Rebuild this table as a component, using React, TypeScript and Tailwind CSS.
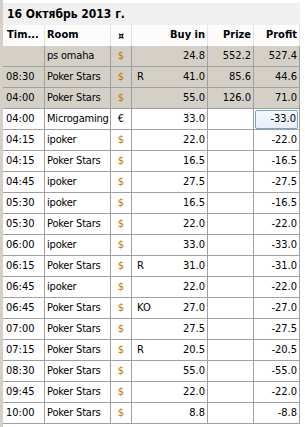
import React from "react";

type Row = {
  t: string;
  room: string;
  c: string;
  type: string;
  buy: string;
  prize: string;
  profit: string;
  gray?: boolean;
  sel?: boolean;
};

const rows: Row[] = [
  { t: "", room: "ps omaha", c: "$", type: "", buy: "24.8", prize: "552.2", profit: "527.4", gray: true },
  { t: "08:30", room: "Poker Stars", c: "$", type: "R", buy: "41.0", prize: "85.6", profit: "44.6", gray: true },
  { t: "04:00", room: "Poker Stars", c: "$", type: "", buy: "55.0", prize: "126.0", profit: "71.0", gray: true },
  { t: "04:00", room: "Microgaming", c: "€", type: "", buy: "33.0", prize: "", profit: "-33.0", sel: true },
  { t: "04:15", room: "ipoker", c: "$", type: "", buy: "22.0", prize: "", profit: "-22.0" },
  { t: "04:15", room: "Poker Stars", c: "$", type: "", buy: "16.5", prize: "", profit: "-16.5" },
  { t: "04:45", room: "ipoker", c: "$", type: "", buy: "27.5", prize: "", profit: "-27.5" },
  { t: "05:30", room: "ipoker", c: "$", type: "", buy: "16.5", prize: "", profit: "-16.5" },
  { t: "05:30", room: "Poker Stars", c: "$", type: "", buy: "22.0", prize: "", profit: "-22.0" },
  { t: "06:00", room: "ipoker", c: "$", type: "", buy: "33.0", prize: "", profit: "-33.0" },
  { t: "06:15", room: "Poker Stars", c: "$", type: "R", buy: "31.0", prize: "", profit: "-31.0" },
  { t: "06:45", room: "ipoker", c: "$", type: "", buy: "22.0", prize: "", profit: "-22.0" },
  { t: "06:45", room: "Poker Stars", c: "$", type: "KO", buy: "27.0", prize: "", profit: "-27.0" },
  { t: "07:00", room: "Poker Stars", c: "$", type: "", buy: "27.5", prize: "", profit: "-27.5" },
  { t: "07:15", room: "Poker Stars", c: "$", type: "R", buy: "20.5", prize: "", profit: "-20.5" },
  { t: "08:30", room: "Poker Stars", c: "$", type: "", buy: "55.0", prize: "", profit: "-55.0" },
  { t: "09:45", room: "Poker Stars", c: "$", type: "", buy: "22.0", prize: "", profit: "-22.0" },
  { t: "10:00", room: "Poker Stars", c: "$", type: "", buy: "8.8", prize: "", profit: "-8.8" },
];

const cols = "grid grid-cols-[42px_66px_21px_76px_46px_46px]";

export default function App() {
  return (
    <div
      className="flex h-[427px] w-[305px] overflow-hidden bg-white text-[11px] text-black"
      style={{ fontFamily: '"DejaVu Sans Condensed", "Liberation Sans", sans-serif' }}
    >
      <div className="w-[3px] shrink-0 bg-[#d4d0c8]" />
      <div className="flex w-[297px] shrink-0 flex-col">
        {/* title */}
        <div className="flex h-[25px] items-center border-t-[3px] border-white bg-[#f0f0f0] pl-[4px] text-[12px] font-bold">
          16 Октябрь 2013 г.
        </div>
        {/* header */}
        <div className={`${cols} h-[21px] bg-[#fcfcfc] font-bold`}>
          <div className="flex items-center border-r border-[#e3e3e3] pl-[4px]">Tim...</div>
          <div className="flex items-center border-r border-[#e3e3e3] pl-[2px]">Room</div>
          <div className="flex items-center justify-center border-r border-[#e3e3e3] text-[10px]">¤</div>
          <div className="flex items-center justify-end border-r border-[#e3e3e3] pr-[2px]">Buy in</div>
          <div className="flex items-center justify-end border-r border-[#e3e3e3] pr-[2px]">Prize</div>
          <div className="flex items-center justify-end border-r border-[#e3e3e3] pr-[2px]">Profit</div>
        </div>
        {rows.map((r, i) => (
          <div
            key={i}
            className={`${cols} h-[21px] border-b border-[#a0a0a0] ${r.gray ? "bg-[#d4d0c8]" : "bg-white"}`}
          >
            <div className="flex items-center border-r border-[#a0a0a0] pl-[3px]">{r.t}</div>
            <div className="flex items-center overflow-hidden border-r border-[#a0a0a0] pl-[2px] tracking-[-0.2px] whitespace-nowrap">
              {r.room}
            </div>
            <div
              className={`flex items-center justify-center border-r border-[#a0a0a0] ${
                r.c === "$" ? "text-[#c87400]" : "text-black"
              }`}
            >
              {r.c}
            </div>
            <div className="flex items-center justify-between border-r border-[#a0a0a0] pl-[5px] pr-[2px]">
              <span>{r.type}</span>
              <span>{r.buy}</span>
            </div>
            <div className="flex items-center justify-end border-r border-[#a0a0a0] pr-[2px]">{r.prize}</div>
            <div className="flex items-stretch border-r border-[#a0a0a0]">
              {r.sel ? (
                <div className="m-[1px] flex flex-1 items-center justify-end rounded-[2px] border border-[#7da2ce] bg-gradient-to-b from-[#f4f8fd] to-[#e6effa] pr-[1px]">
                  {r.profit}
                </div>
              ) : (
                <div className="flex flex-1 items-center justify-end pr-[2px]">{r.profit}</div>
              )}
            </div>
          </div>
        ))}
      </div>
    </div>
  );
}
